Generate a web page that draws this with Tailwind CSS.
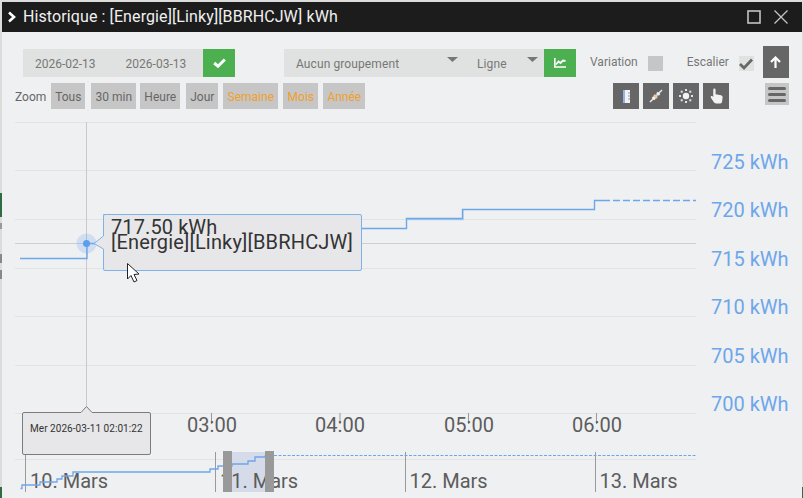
<!DOCTYPE html>
<html lang="fr">
<head>
    <meta charset="UTF-8">
    <title>Historique</title>
    <script src="https://cdn.jsdelivr.net/npm/@tailwindcss/browser@4"></script>
</head>
<body class="bg-[#dcdcdc] font-['Roboto',sans-serif] overflow-hidden">
    <!--Background page edge-->
    <div class="relative w-[803px] h-[498px] overflow-hidden">
        <div class="absolute left-0 top-[193px] w-[2px] h-[24px] bg-[#2f6b45]"></div>
        <div class="absolute left-0 top-[223px] w-[2px] h-[6px] bg-[#999]"></div>
        <div class="absolute left-0 top-[254px] w-[2px] h-[9px] bg-[#888]"></div>
        <div class="absolute left-0 top-[270px] w-[2px] h-[9px] bg-[#888]"></div>
        <div class="absolute left-0 bottom-0 w-[2px] h-[11px] bg-[#2f6b45]"></div>
        <div class="absolute right-0 bottom-0 w-[1px] h-[11px] bg-[#2f6b45]"></div>

        <!--Window-->
        <div class="absolute left-[2px] top-[2px] w-[800px] h-[496px] bg-[#eff0f2] flex flex-col">
            <!--Title bar-->
            <div class="h-[30px] bg-[#1c1c1c] flex items-center text-[#f0f0f0] shrink-0">
                <svg class="ml-[5px] w-[10px] h-[12px]" viewBox="0 0 10 12"><path d="M2 1.5 L7 6 L2 10.5" fill="none" stroke="#fff" stroke-width="2.6"/></svg>
                <span class="ml-[6px] text-[16px] leading-none tracking-[0.1px]">Historique : [Energie][Linky][BBRHCJW] kWh</span>
                <svg class="ml-auto w-[14px] h-[14px]" viewBox="0 0 14 14"><rect x="1" y="1" width="12" height="12" fill="none" stroke="#c4c4c4" stroke-width="1.6"/></svg>
                <svg class="ml-[13px] mr-[14px] w-[14px] h-[14px]" viewBox="0 0 14 14"><path d="M0.5 0.5 L13.5 13.5 M13.5 0.5 L0.5 13.5" stroke="#c4c4c4" stroke-width="1.3"/></svg>
            </div>

            <!--Toolbar row 1-->
            <div class="h-[51px] shrink-0 flex items-start pl-[21px] text-[12px] text-[#777]">
                <div class="mt-[17px] pt-[1px] h-[28px] w-[180px] bg-[#e0e2e1] flex items-center pl-[12px] gap-[30px]">
                    <span>2026-02-13</span><span>2026-03-13</span>
                </div>
                <div class="mt-[17px] h-[28px] w-[32px] bg-[#4caf50] flex items-center justify-center">
                    <svg class="w-[13px] h-[10px]" viewBox="0 0 13 10"><path d="M1.2 5 L5 8.2 L11.8 1.5" fill="none" stroke="#fff" stroke-width="3"/></svg>
                </div>
                <div class="relative mt-[17px] ml-[49px] pt-[1px] h-[28px] w-[260px] bg-[#e0e2e1] flex items-center pl-[12px] tracking-[0.1px]">
                    <span class="w-[181px]">Aucun groupement</span>
                    <span>Ligne</span>
                    <svg class="absolute left-[163px] top-[8px] w-[11px] h-[5px]" viewBox="0 0 11 5"><path d="M0 0 H11 L5.5 5 Z" fill="#777"/></svg>
                    <svg class="absolute left-[243px] top-[8px] w-[11px] h-[5px]" viewBox="0 0 11 5"><path d="M0 0 H11 L5.5 5 Z" fill="#777"/></svg>
                </div>
                <div class="mt-[17px] h-[28px] w-[32px] bg-[#4caf50] flex items-center justify-center">
                    <svg class="w-[12px] h-[10px]" viewBox="0 0 12 10"><path d="M0.8 0 V9 H12" fill="none" stroke="#fff" stroke-width="1.6"/><path d="M2 6.5 L4.5 3.5 L6.5 5 L9 2.5 L11.5 3" fill="none" stroke="#fff" stroke-width="1.8"/></svg>
                </div>
                <span class="mt-[24px] ml-[14px] leading-none">Variation</span>
                <div class="mt-[24px] ml-[10px] w-[15px] h-[15px] bg-[#c6c6c6]"></div>
                <span class="mt-[24px] ml-[24px] leading-none">Escalier</span>
                <div class="mt-[24px] ml-[10px] w-[15px] h-[15px] bg-[#e0e2e1] flex items-center justify-center">
                    <svg class="w-[14px] h-[12px]" viewBox="0 0 14 12"><path d="M1 6 L5 10 L13 1.5" fill="none" stroke="#666" stroke-width="2.8"/></svg>
                </div>
                <div class="mt-[14px] ml-[9px] w-[26px] h-[32px] bg-[#666] flex items-center justify-center">
                    <svg class="w-[11px] h-[12px]" viewBox="0 0 11 12"><path d="M5.5 12 V2 M1 6 L5.5 1.5 L10 6" fill="none" stroke="#fff" stroke-width="2.2"/></svg>
                </div>
            </div>

            <!--Toolbar row 2-->
            <div class="h-[26px] shrink-0 flex items-start pl-[13px] text-[12px] text-[#666]">
                <span class="mr-[5px] h-[26px] leading-[28px]">Zoom</span>
                <button class="w-[34px] h-[26px] pt-[1px] bg-[#c6c6c6] mr-[6px]">Tous</button>
                <button class="w-[45px] h-[26px] pt-[1px] bg-[#c6c6c6] mr-[4px]">30 min</button>
                <button class="w-[40px] h-[26px] pt-[1px] bg-[#c6c6c6] mr-[6px]">Heure</button>
                <button class="w-[32px] h-[26px] pt-[1px] bg-[#c6c6c6] mr-[5px]">Jour</button>
                <button class="w-[55px] h-[26px] pt-[1px] bg-[#c6c6c6] mr-[5px] text-[#f0a02c]">Semaine</button>
                <button class="w-[35px] h-[26px] pt-[1px] bg-[#c6c6c6] mr-[5px] text-[#f0a02c]">Mois</button>
                <button class="w-[42px] h-[26px] pt-[1px] bg-[#c6c6c6] text-[#f0a02c]">Année</button>

                <div class="ml-[248px] w-[26px] h-[26px] bg-[#666] flex items-center justify-center">
                    <svg class="w-[7px] h-[13px]" viewBox="0 0 7 13"><rect x="1" y="0" width="6" height="13" fill="#f2f2f2"/><path d="M1 0 V13" stroke="#8fb4ea" stroke-width="2"/><path d="M5 3 H7 M5 6 H7 M5 9 H7" stroke="#999" stroke-width="1"/></svg>
                </div>
                <div class="ml-[4px] w-[26px] h-[26px] bg-[#666] flex items-center justify-center">
                    <svg class="w-[14px] h-[14px]" viewBox="0 0 14 14"><path d="M1 13 L13 1" stroke="#dfe6f2" stroke-width="1.6"/><path d="M5 6 L8 9" stroke="#f0c890" stroke-width="2.6"/><path d="M8 3.5 L10.5 6 M3.5 8 L6 10.5" stroke="#f2f2f2" stroke-width="2.4"/></svg>
                </div>
                <div class="ml-[4px] w-[26px] h-[26px] bg-[#666] flex items-center justify-center">
                    <svg class="w-[14px] h-[14px]" viewBox="0 0 14 14"><circle cx="7" cy="7" r="3.2" fill="#f2f2f2"/><g fill="#dbe6f5"><rect x="6" y="0" width="2" height="2"/><rect x="6" y="12" width="2" height="2"/><rect x="0" y="6" width="2" height="2"/><rect x="12" y="6" width="2" height="2"/><rect x="1.7" y="1.7" width="2" height="2"/><rect x="10.3" y="1.7" width="2" height="2"/><rect x="1.7" y="10.3" width="2" height="2"/><rect x="10.3" y="10.3" width="2" height="2"/></g></svg>
                </div>
                <div class="ml-[4px] w-[26px] h-[26px] bg-[#666] flex items-center justify-center">
                    <svg class="w-[13px] h-[16px]" viewBox="0 0 14 16"><path d="M3.5 1.5 Q3.5 0 4.7 0 Q6 0 6 1.5 V6 L12 7.2 Q14 7.8 13.6 10 L13 14 Q12.8 16 11 16 H6.5 Q5 16 4 14.5 L1 10 Q0.2 8.6 1.4 8 Q2.5 7.6 3.5 9 Z" fill="#f2f2f2"/></svg>
                </div>
                <div class="ml-[36px] w-[24px] h-[22px] bg-[#c6c6c6] flex flex-col items-center justify-center gap-[3px]">
                    <div class="w-[18px] h-[3px] rounded-sm bg-[#666]"></div>
                    <div class="w-[18px] h-[3px] rounded-sm bg-[#666]"></div>
                    <div class="w-[18px] h-[3px] rounded-sm bg-[#666]"></div>
                </div>
            </div>

            <!--Chart: coordinates in this svg are the window's, offset by the toolbar height-->
            <div class="relative flex-1">
                <svg class="absolute left-[-2px] top-[-109px] w-[803px] h-[498px]" viewBox="0 0 803 498" font-family="Roboto, sans-serif">
                    <path d="M15 122.5 H696 M15 170.5 H696 M15 219.5 H696 M15 268.5 H696 M15 316.5 H696 M15 365.5 H696 M15 413.5 H696 M15 459.5 H696" stroke="#e2e3e5"/>
                    <path d="M15 243.5 H696" stroke="#cfcfd2"/>
                    <path d="M86.5 122 V406" stroke="#c9c9cc"/>

                    <g fill="#6ea6ea" font-size="20">
                        <text x="711" y="169">725 kWh</text>
                        <text x="711" y="217">720 kWh</text>
                        <text x="711" y="266">715 kWh</text>
                        <text x="711" y="314">710 kWh</text>
                        <text x="711" y="363">705 kWh</text>
                        <text x="711" y="411">700 kWh</text>
                    </g>

                    <path d="M211.5 413 V424 M340 413 V424 M468.5 413 V424 M596.5 413 V424" stroke="#999"/>
                    <g fill="#5c5c5c" font-size="20" text-anchor="middle">
                        <text x="212" y="432">03:00</text>
                        <text x="340" y="432">04:00</text>
                        <text x="469" y="432">05:00</text>
                        <text x="597" y="432">06:00</text>
                    </g>

                    <!--Main series-->
                    <path d="M407.5 219.5 H463 V210" fill="none" stroke="#6ea6ea" stroke-opacity="0.45" stroke-width="1.4"/>
                    <path d="M20 258.5 H87 V243.5 H120 V228.5 H406.5 V218.5 H462.5 V209.5 H594.5 V200.5 H603" fill="none" stroke="#6ea6ea" stroke-width="1.4"/>
                    <path d="M603 200.5 H696" fill="none" stroke="#6ea6ea" stroke-width="1.4" stroke-dasharray="7 3"/>
                    <circle cx="86.5" cy="243.5" r="10" fill="#6ea6ea" fill-opacity="0.25"/>
                    <circle cx="86.5" cy="243.5" r="3.5" fill="#5c9ded"/>

                    <!--Navigator-->
                    <path d="M25.5 452 V492 M215.5 452 V492 M405.5 452 V492 M595.5 452 V492" stroke="#9a9a9a"/>
                    <rect x="223" y="452" width="51" height="40" fill="#d5dbe8"/>
                    <g fill="#5c5c5c" font-size="20">
                        <text x="30" y="488">10. Mars</text>
                        <text x="220" y="488">11. Mars</text>
                        <text x="409.5" y="488">12. Mars</text>
                        <text x="599.5" y="488">13. Mars</text>
                    </g>
                    <path d="M20.5 488.5 H22 V485 H40 V482 H57 V479 H62 V476 H73 V472 H210 V469 H218 V466 H232 V464 H248 V461 H255 V457 H265 V455.5" fill="none" stroke="#6ea6ea" stroke-width="1.3"/>
                    <path d="M265 455.5 H696" fill="none" stroke="#6ea6ea" stroke-width="1" stroke-dasharray="3 1.5"/>
                    <rect x="223" y="451" width="9" height="41" fill="#999"/>
                    <rect x="265" y="451" width="9" height="41" fill="#999"/>

                    <!--Value tooltip-->
                    <path d="M103.5 214.5 H360 Q361.5 214.5 361.5 216 V269 Q361.5 270.5 360 270.5 H105 Q103.5 270.5 103.5 269 V249 L94 243.5 L103.5 236 V216 Q103.5 214.5 105 214.5 Z" fill="#e7e7e9" stroke="#7fb1ea"/>
                    <g fill="#333" font-size="20">
                        <text x="111" y="234" letter-spacing="0.1">717.50 kWh</text>
                        <text x="111" y="249" letter-spacing="0.17">[Energie][Linky][BBRHCJW]</text>
                    </g>

                    <!--Date tooltip-->
                    <path d="M24 412.5 H81 L86.5 406.5 L92 412.5 H149 Q150.5 412.5 150.5 414 V453 Q150.5 454.5 149 454.5 H24 Q22.5 454.5 22.5 453 V414 Q22.5 412.5 24 412.5 Z" fill="#e7e7e9" stroke="#7c7c7c"/>
                    <text x="30" y="432" fill="#333" font-size="10" letter-spacing="0.05">Mer 2026-03-11 02:01:22</text>

                    <!--Mouse cursor-->
                    <path d="M127.5 263.5 V279 L131 275.5 L134 282 L137 280.5 L134 274.5 L139 274 Z" fill="#fff" stroke="#222" stroke-width="1"/>
                </svg>
            </div>
        </div>
    </div>
</body>
</html>
